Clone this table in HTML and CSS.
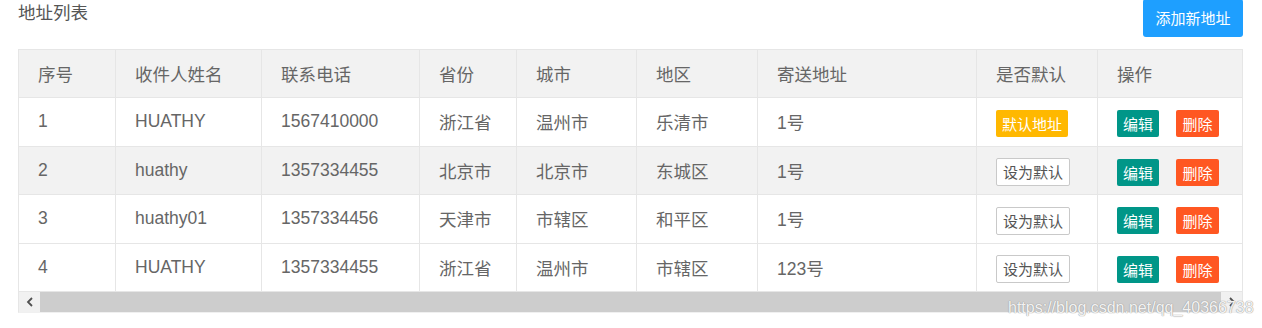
FILE: index.html
```html
<!DOCTYPE html>
<html lang="zh">
<head>
<meta charset="utf-8">
<title>地址列表</title>
<link rel="stylesheet" href="styles.css">
</head>
<body>
<div class="page">
  <div class="topbar">
    <div class="title">地址列表</div>
    <button class="btn btn-add">添加新地址</button>
  </div>
  <div class="table-box">
    <table class="addr-table">
      <thead>
        <tr>
          <th class="c1">序号</th>
          <th class="c2">收件人姓名</th>
          <th class="c3">联系电话</th>
          <th class="c4">省份</th>
          <th class="c5">城市</th>
          <th class="c6">地区</th>
          <th class="c7">寄送地址</th>
          <th class="c8">是否默认</th>
          <th class="c9">操作</th>
        </tr>
      </thead>
      <tbody>
        <tr class="r1">
          <td>1</td><td>HUATHY</td><td>1567410000</td><td>浙江省</td><td>温州市</td><td>乐清市</td><td>1号</td>
          <td><span class="btn-xs btn-yellow">默认地址</span></td>
          <td><div class="ops"><span class="btn-xs btn-green">编辑</span><span class="btn-xs btn-red">删除</span></div></td>
        </tr>
        <tr class="r2 hover">
          <td>2</td><td>huathy</td><td>1357334455</td><td>北京市</td><td>北京市</td><td>东城区</td><td>1号</td>
          <td><span class="btn-xs btn-plain">设为默认</span></td>
          <td><div class="ops"><span class="btn-xs btn-green">编辑</span><span class="btn-xs btn-red">删除</span></div></td>
        </tr>
        <tr class="r3">
          <td>3</td><td>huathy01</td><td>1357334456</td><td>天津市</td><td>市辖区</td><td>和平区</td><td>1号</td>
          <td><span class="btn-xs btn-plain">设为默认</span></td>
          <td><div class="ops"><span class="btn-xs btn-green">编辑</span><span class="btn-xs btn-red">删除</span></div></td>
        </tr>
        <tr class="r4">
          <td>4</td><td>HUATHY</td><td>1357334455</td><td>浙江省</td><td>温州市</td><td>市辖区</td><td>123号</td>
          <td><span class="btn-xs btn-plain">设为默认</span></td>
          <td><div class="ops"><span class="btn-xs btn-green">编辑</span><span class="btn-xs btn-red">删除</span></div></td>
        </tr>
      </tbody>
    </table>
    <div class="scrollbar">
      <div class="sb-arrow">
        <svg width="8" height="10" viewBox="0 0 8 10"><path d="M6 1 L2 5 L6 9" fill="none" stroke="#505050" stroke-width="1.8"/></svg>
      </div>
      <div class="sb-thumb"></div>
      <div class="sb-arrow">
        <svg width="8" height="10" viewBox="0 0 8 10"><path d="M2 1 L6 5 L2 9" fill="none" stroke="#505050" stroke-width="1.8"/></svg>
      </div>
    </div>
  </div>
  <div class="watermark">https://blog.csdn.net/qq_40366738</div>
</div>
</body>
</html>
```
FILE: styles.css
```css
html, body {
  margin: 0;
  padding: 0;
  background: #ffffff;
}

.page {
  position: relative;
  width: 1262px;
  height: 328px;
  padding: 0 19px 0 18px;
  box-sizing: border-box;
  font-family: "Liberation Sans", "Noto Sans CJK SC", sans-serif;
  color: #666666;
  overflow: hidden;
}

.topbar {
  display: flex;
  justify-content: space-between;
  align-items: flex-start;
  height: 49px;
}

.title {
  font-family: "Noto Sans CJK SC", sans-serif;
  font-size: 17.5px;
  line-height: 24px;
  color: #555555;
}

.btn {
  border: none;
  outline: none;
  cursor: pointer;
  font-family: "Noto Sans CJK SC", sans-serif;
}

.btn-add {
  margin-top: -1px;
  width: 100px;
  height: 37.5px;
  padding: 0;
  background: #1e9fff;
  color: #ffffff;
  font-size: 15px;
  line-height: 37.5px;
  border-radius: 3px;
}

.table-box {
  width: 1225px;
  box-sizing: border-box;
  border: 1px solid #e6e6e6;
  border-bottom-color: #f0f0f0;
  overflow: hidden;
}

.addr-table {
  width: 1223px;
  table-layout: fixed;
  border-collapse: separate;
  border-spacing: 0;
  font-size: 17.5px;
}

.addr-table th,
.addr-table td {
  box-sizing: border-box;
  padding: 0 19px;
  text-align: left;
  font-weight: normal;
  white-space: nowrap;
  border-right: 1px solid #e6e6e6;
  border-bottom: 1px solid #e6e6e6;
  vertical-align: middle;
}

.addr-table th:last-child,
.addr-table td:last-child {
  border-right: none;
}

.addr-table th {
  height: 48px;
  background: #f2f2f2;
  font-family: "Noto Sans CJK SC", sans-serif;
}

.addr-table td {
  height: 48.5px;
  background: #ffffff;
}

.addr-table tr.hover td {
  background: #f2f2f2;
}

.c1 { width: 97px; }
.c2 { width: 146px; }
.c3 { width: 158px; }
.c4 { width: 97px; }
.c5 { width: 120px; }
.c6 { width: 121px; }
.c7 { width: 219px; }
.c8 { width: 121px; }
.c9 { width: 144px; }

.btn-xs {
  display: inline-block;
  box-sizing: border-box;
  height: 27px;
  line-height: 27px;
  padding: 0 6px;
  font-family: "Noto Sans CJK SC", sans-serif;
  font-size: 15px;
  color: #ffffff;
  border-radius: 2px;
  vertical-align: middle;
  position: relative;
  top: 2px;
}

.btn-yellow {
  width: 72px;
  background: #ffb800;
  text-align: center;
  padding: 0;
}

.btn-plain {
  width: 74px;
  height: 28px;
  line-height: 26px;
  padding: 0;
  text-align: center;
  background: #ffffff;
  color: #555555;
  border: 1px solid #c9c9c9;
}

.btn-green {
  width: 42px;
  padding: 0;
  text-align: center;
  background: #009688;
}

.btn-red {
  width: 43px;
  padding: 0;
  text-align: center;
  background: #ff5722;
}

.ops {
  display: flex;
  gap: 17px;
  align-items: center;
}

.scrollbar {
  display: flex;
  height: 20px;
  background: #f1f1f1;
}

.sb-arrow {
  width: 21px;
  display: flex;
  align-items: center;
  justify-content: center;
}

.sb-thumb {
  flex: 1;
  background: #cdcdcd;
}

.watermark {
  position: absolute;
  left: 1008px;
  top: 298px;
  font-family: "Liberation Sans", sans-serif;
  font-size: 16px;
  line-height: 20px;
  color: rgba(255, 255, 255, 0.9);
  text-shadow: 0 0 1px #9a9a9a, 0 0 1px #9a9a9a;
  white-space: nowrap;
}
```
